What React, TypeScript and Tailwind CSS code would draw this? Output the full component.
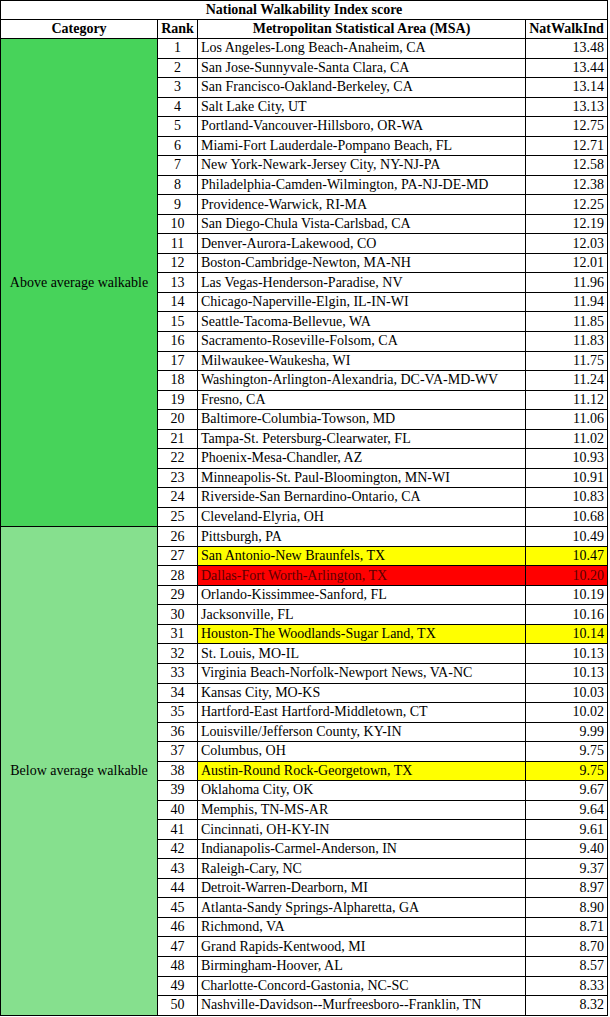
import React from "react";

type Row = {
  rank: number;
  name: string;
  score: string;
  mark?: "yellow" | "red";
};

const rows: Row[] = [
  { rank: 1, name: "Los Angeles-Long Beach-Anaheim, CA", score: "13.48" },
  { rank: 2, name: "San Jose-Sunnyvale-Santa Clara, CA", score: "13.44" },
  { rank: 3, name: "San Francisco-Oakland-Berkeley, CA", score: "13.14" },
  { rank: 4, name: "Salt Lake City, UT", score: "13.13" },
  { rank: 5, name: "Portland-Vancouver-Hillsboro, OR-WA", score: "12.75" },
  { rank: 6, name: "Miami-Fort Lauderdale-Pompano Beach, FL", score: "12.71" },
  { rank: 7, name: "New York-Newark-Jersey City, NY-NJ-PA", score: "12.58" },
  { rank: 8, name: "Philadelphia-Camden-Wilmington, PA-NJ-DE-MD", score: "12.38" },
  { rank: 9, name: "Providence-Warwick, RI-MA", score: "12.25" },
  { rank: 10, name: "San Diego-Chula Vista-Carlsbad, CA", score: "12.19" },
  { rank: 11, name: "Denver-Aurora-Lakewood, CO", score: "12.03" },
  { rank: 12, name: "Boston-Cambridge-Newton, MA-NH", score: "12.01" },
  { rank: 13, name: "Las Vegas-Henderson-Paradise, NV", score: "11.96" },
  { rank: 14, name: "Chicago-Naperville-Elgin, IL-IN-WI", score: "11.94" },
  { rank: 15, name: "Seattle-Tacoma-Bellevue, WA", score: "11.85" },
  { rank: 16, name: "Sacramento-Roseville-Folsom, CA", score: "11.83" },
  { rank: 17, name: "Milwaukee-Waukesha, WI", score: "11.75" },
  { rank: 18, name: "Washington-Arlington-Alexandria, DC-VA-MD-WV", score: "11.24" },
  { rank: 19, name: "Fresno, CA", score: "11.12" },
  { rank: 20, name: "Baltimore-Columbia-Towson, MD", score: "11.06" },
  { rank: 21, name: "Tampa-St. Petersburg-Clearwater, FL", score: "11.02" },
  { rank: 22, name: "Phoenix-Mesa-Chandler, AZ", score: "10.93" },
  { rank: 23, name: "Minneapolis-St. Paul-Bloomington, MN-WI", score: "10.91" },
  { rank: 24, name: "Riverside-San Bernardino-Ontario, CA", score: "10.83" },
  { rank: 25, name: "Cleveland-Elyria, OH", score: "10.68" },
  { rank: 26, name: "Pittsburgh, PA", score: "10.49" },
  { rank: 27, name: "San Antonio-New Braunfels, TX", score: "10.47", mark: "yellow" },
  { rank: 28, name: "Dallas-Fort Worth-Arlington, TX", score: "10.20", mark: "red" },
  { rank: 29, name: "Orlando-Kissimmee-Sanford, FL", score: "10.19" },
  { rank: 30, name: "Jacksonville, FL", score: "10.16" },
  { rank: 31, name: "Houston-The Woodlands-Sugar Land, TX", score: "10.14", mark: "yellow" },
  { rank: 32, name: "St. Louis, MO-IL", score: "10.13" },
  { rank: 33, name: "Virginia Beach-Norfolk-Newport News, VA-NC", score: "10.13" },
  { rank: 34, name: "Kansas City, MO-KS", score: "10.03" },
  { rank: 35, name: "Hartford-East Hartford-Middletown, CT", score: "10.02" },
  { rank: 36, name: "Louisville/Jefferson County, KY-IN", score: "9.99" },
  { rank: 37, name: "Columbus, OH", score: "9.75" },
  { rank: 38, name: "Austin-Round Rock-Georgetown, TX", score: "9.75", mark: "yellow" },
  { rank: 39, name: "Oklahoma City, OK", score: "9.67" },
  { rank: 40, name: "Memphis, TN-MS-AR", score: "9.64" },
  { rank: 41, name: "Cincinnati, OH-KY-IN", score: "9.61" },
  { rank: 42, name: "Indianapolis-Carmel-Anderson, IN", score: "9.40" },
  { rank: 43, name: "Raleigh-Cary, NC", score: "9.37" },
  { rank: 44, name: "Detroit-Warren-Dearborn, MI", score: "8.97" },
  { rank: 45, name: "Atlanta-Sandy Springs-Alpharetta, GA", score: "8.90" },
  { rank: 46, name: "Richmond, VA", score: "8.71" },
  { rank: 47, name: "Grand Rapids-Kentwood, MI", score: "8.70" },
  { rank: 48, name: "Birmingham-Hoover, AL", score: "8.57" },
  { rank: 49, name: "Charlotte-Concord-Gastonia, NC-SC", score: "8.33" },
  { rank: 50, name: "Nashville-Davidson--Murfreesboro--Franklin, TN", score: "8.32" },
];

const markClass = (mark?: Row["mark"]) => {
  if (mark === "yellow") return "bg-[#ffff00] text-black";
  if (mark === "red") return "bg-[#ff0000] text-[#5c0000]";
  return "bg-white text-black";
};

export default function App() {
  return (
    <div className="bg-white w-[610px] h-[1017px] font-['Liberation_Serif',serif] text-[14px] text-black">
      <div className="grid w-[608px] grid-cols-[156px_39px_327px_81px] grid-rows-[18px_18px_repeat(50,18.54px)] gap-px bg-black p-px">
        <div className="col-span-4 flex items-center justify-center bg-white font-bold leading-none">
          National Walkability Index score
        </div>

        <div className="flex items-center justify-center bg-white font-bold leading-none">
          Category
        </div>
        <div className="flex items-center justify-center bg-white font-bold leading-none">
          Rank
        </div>
        <div className="flex items-center justify-center bg-white font-bold leading-none">
          Metropolitan Statistical Area (MSA)
        </div>
        <div className="flex items-center justify-center bg-white font-bold leading-none">
          NatWalkInd
        </div>

        <div className="[grid-area:3/1/28/2] flex items-center justify-center bg-[#47d35a] leading-none">
          Above average walkable
        </div>
        <div className="[grid-area:28/1/53/2] flex items-center justify-center bg-[#86e08e] leading-none">
          Below average walkable
        </div>

        {rows.map((row) => (
          <React.Fragment key={row.rank}>
            <div className="flex items-center justify-center bg-white leading-none">
              {row.rank}
            </div>
            <div
              className={`flex items-center pl-[3px] leading-none whitespace-nowrap ${markClass(row.mark)}`}
            >
              {row.name}
            </div>
            <div
              className={`flex items-center justify-end pr-[3px] leading-none ${markClass(row.mark)}`}
            >
              {row.score}
            </div>
          </React.Fragment>
        ))}
      </div>
    </div>
  );
}
